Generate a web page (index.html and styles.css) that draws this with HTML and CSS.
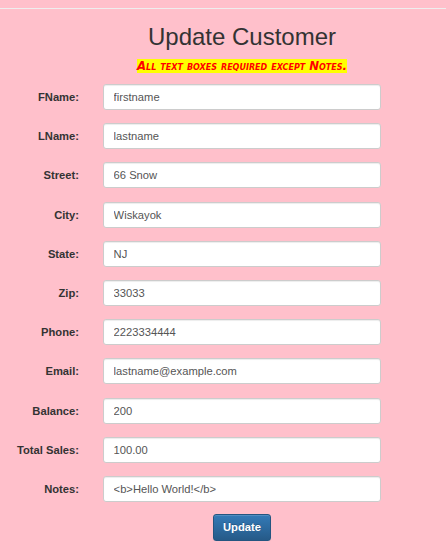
FILE: index.html
```html
<!DOCTYPE html>
<html>
<head>
<meta charset="utf-8">
<title>Update Customer</title>
<link rel="stylesheet" href="styles.css">
</head>
<body>
<hr class="rule">
<form class="form">
  <div class="head">
    <h2 class="title">Update Customer</h2>
    <p class="note"><span class="note-text">All text boxes required except Notes.</span></p>
  </div>
  <div class="rows">
    <label class="label">FName:</label><input class="field" type="text" value="firstname">
    <label class="label">LName:</label><input class="field" type="text" value="lastname">
    <label class="label">Street:</label><input class="field" type="text" value="66 Snow">
    <label class="label">City:</label><input class="field" type="text" value="Wiskayok">
    <label class="label">State:</label><input class="field" type="text" value="NJ">
    <label class="label">Zip:</label><input class="field" type="text" value="33033">
    <label class="label">Phone:</label><input class="field" type="text" value="2223334444">
    <label class="label">Email:</label><input class="field" type="text" value="lastname@example.com">
    <label class="label">Balance:</label><input class="field" type="text" value="200">
    <label class="label">Total Sales:</label><input class="field" type="text" value="100.00">
    <label class="label">Notes:</label><input class="field" type="text" value="<b>Hello World!</b>">
  </div>
  <div class="actions">
    <button class="btn" type="button">Update</button>
  </div>
</form>
</body>
</html>
```
FILE: styles.css
```css
html, body {
  margin: 0;
  padding: 0;
}
body {
  background: #ffc0cb;
  font-family: "Liberation Sans", Arial, Helvetica, sans-serif;
  font-size: 11.2px;
  line-height: 16px;
  color: #333;
  padding-top: 8px;
}
.rule {
  margin: 0;
  border: 0;
  border-top: 1px solid #eeeeee;
  height: 0;
}
.form {
  display: block;
  width: 381px;
}
.head {
  margin-left: 103px;
  width: 278px;
  text-align: center;
}
.title {
  margin: 14.5px 0 0;
  font-size: 24px;
  line-height: 26.4px;
  font-weight: 500;
  color: #333;
}
.note {
  margin: 8.4px 0 0;
  height: 16px;
  line-height: 16px;
  white-space: nowrap;
}
.note-text {
  background: #ffff00;
  color: #ff0000;
  font-family: "DejaVu Sans", Verdana, sans-serif;
  font-size: 11.7px;
  line-height: 16px;
  font-weight: bold;
  font-style: italic;
  font-variant: small-caps;
}
.rows {
  margin-top: 9.8px;
  display: grid;
  grid-template-columns: 79px 278px;
  column-gap: 24px;
  row-gap: 13.2px;
  align-items: center;
}
.label {
  text-align: right;
  font-weight: bold;
  color: #333;
  white-space: nowrap;
}
.field {
  box-sizing: border-box;
  height: 26px;
  width: 278px;
  margin: 0;
  padding: 4px 9.6px;
  border: 1px solid #cccccc;
  border-radius: 3px;
  background: #fff;
  box-shadow: inset 0 1px 1px rgba(0,0,0,.075);
  font-family: "Liberation Sans", Arial, Helvetica, sans-serif;
  font-size: 11.2px;
  color: #555;
}
.actions {
  margin-left: 103px;
  width: 278px;
  margin-top: 12px;
  display: flex;
  justify-content: center;
}
.btn {
  box-sizing: border-box;
  height: 27px;
  padding: 0 8.6px;
  border: 1px solid #245580;
  border-radius: 3px;
  background-image: linear-gradient(to bottom, #337ab7 0, #265a88 100%);
  box-shadow: inset 0 1px 0 rgba(255,255,255,.15), 0 1px 1px rgba(0,0,0,.075);
  color: #fff;
  text-shadow: 0 -1px 0 rgba(0,0,0,.2);
  font-family: "Liberation Sans", Arial, Helvetica, sans-serif;
  font-size: 11.2px;
  font-weight: bold;
  line-height: 16px;
}
```
